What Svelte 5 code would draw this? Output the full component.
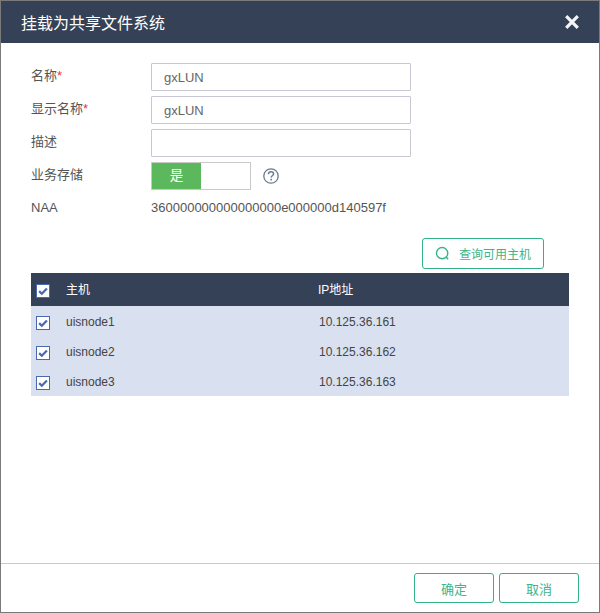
<script>
  const hosts = [
    { name: 'uisnode1', ip: '10.125.36.161' },
    { name: 'uisnode2', ip: '10.125.36.162' },
    { name: 'uisnode3', ip: '10.125.36.163' }
  ];
</script>

{#snippet check()}
  <span class="cb">
    <svg viewBox="0 0 14 14" width="12" height="12"><path d="M2.5 7.2 L5.6 10.2 L11.6 4" fill="none" stroke="#4a69b0" stroke-width="2.6"/></svg>
  </span>
{/snippet}

<div class="dialog">
  <header class="head">
    <h1>挂载为共享文件系统</h1>
    <svg class="close" viewBox="0 0 16 16" width="16" height="16"><path d="M2.2 2.2 L13.8 13.8 M13.8 2.2 L2.2 13.8" stroke="#f4f5f6" stroke-width="3.2" fill="none"/></svg>
  </header>

  <main class="body">
    <div class="form">
      <div class="row"><span class="label">名称<i>*</i></span><div class="input">gxLUN</div></div>
      <div class="row"><span class="label">显示名称<i>*</i></span><div class="input">gxLUN</div></div>
      <div class="row"><span class="label">描述</span><div class="input"></div></div>
      <div class="row">
        <span class="label">业务存储</span>
        <div class="switch"><span class="on">是</span><span class="off"></span></div>
        <svg class="help" viewBox="0 0 16 16" width="16" height="16">
          <circle cx="8" cy="8" r="7.2" fill="none" stroke="#6b7a90" stroke-width="1.3"/>
          <path d="M5.4 6.2 C5.5 4.6 6.7 3.8 8 3.8 C9.5 3.8 10.6 4.7 10.6 6 C10.6 7.5 8.2 7.6 8.2 9.6" fill="none" stroke="#6b7a90" stroke-width="1.5"/>
          <rect x="7.4" y="10.8" width="1.6" height="1.6" fill="#6b7a90"/>
        </svg>
      </div>
      <div class="row naa"><span class="label">NAA</span><span class="value">360000000000000000e000000d140597f</span></div>
    </div>

    <div class="tools">
      <button class="btn query">
        <svg viewBox="0 0 16 16" width="15" height="15"><circle cx="7.6" cy="7.6" r="6" fill="none" stroke="#35b58a" stroke-width="1.5"/><path d="M12 12 L14 14" stroke="#35b58a" stroke-width="1.6"/></svg>
        查询可用主机
      </button>
    </div>

    <table>
      <thead>
        <tr><th class="c">{@render check()}</th><th class="n"><span>主机</span></th><th><span>IP地址</span></th></tr>
      </thead>
      <tbody>
        {#each hosts as h}
          <tr><td class="c">{@render check()}</td><td class="n"><span>{h.name}</span></td><td><span class="ip">{h.ip}</span></td></tr>
        {/each}
      </tbody>
    </table>
  </main>

  <footer class="foot">
    <button class="btn">确定</button>
    <button class="btn">取消</button>
  </footer>
</div>

<style>
  :global(body) { margin: 0; background: #fff; }
  .dialog {
    box-sizing: border-box;
    width: 600px;
    height: 613px;
    border: 1px solid #7a7a7a;
    display: flex;
    flex-direction: column;
    font-family: "Liberation Sans", "Noto Sans CJK SC", sans-serif;
    font-size: 13px;
    color: #555;
    background: #fff;
  }
  .head {
    flex: none;
    height: 42px;
    background: #354157;
    display: flex;
    align-items: center;
    justify-content: space-between;
    padding: 0 19px 0 20px;
  }
  h1 { margin: 0; font-size: 16px; font-weight: 400; color: #fff; }
  .body { flex: 1; padding: 20px 30px 0; }
  .form { display: flex; flex-direction: column; gap: 5px; }
  .row { display: flex; align-items: center; height: 28px; }
  .label { width: 120px; flex: none; padding-bottom: 5px; }
  .label i { color: #f03030; font-style: normal; }
  .input {
    box-sizing: border-box;
    width: 260px;
    height: 28px;
    line-height: 27px;
    border: 1px solid #c9c7d3;
    border-radius: 1px;
    padding: 0 12px;
    font-size: 13px;
    color: #666;
  }
  .switch {
    box-sizing: border-box;
    display: flex;
    width: 100px;
    height: 28px;
    border: 1px solid #c9c9c9;
  }
  .on { width: 49px; background: #5cb85c; color: #fff; text-align: center; line-height: 26px; font-size: 13.5px; }
  .help { margin-left: 12px; }
  .naa { margin-top: 3px; height: 25px; }
  .naa .label { padding-bottom: 7px; }
  .naa .value { padding-bottom: 7px; }
  .tools { display: flex; justify-content: flex-end; padding: 15px 25px 4px 0; }
  .btn {
    box-sizing: border-box;
    width: 80px;
    height: 30px;
    border: 1px solid #2fb387;
    border-radius: 3px;
    background: #fff;
    color: #3cb48c;
    font: inherit;
    padding: 0;
  }
  .query {
    width: 122px;
    height: 31px;
    font-size: 12px;
    display: flex;
    align-items: center;
    gap: 9px;
    padding-left: 12px;
  }
  table { width: 538px; border-collapse: collapse; table-layout: fixed; font-size: 12px; margin-top: 0; }
  th { height: 33px; padding: 0; background: #354157; color: #fff; font-weight: 400; text-align: left; }
  td { height: 30px; padding: 0; background: #d9e0ef; color: #444; }
  th span { position: relative; top: -1px; }
  td span { position: relative; top: 1px; }
  td .ip { left: 1px; }
  th.c, td.c { width: 35px; padding-left: 5px; box-sizing: border-box; }
  td .cb { top: 2px; }
  th .cb { top: 1px; }
  .n { width: 252px; }
  .cb {
    box-sizing: border-box;
    display: flex;
    align-items: center;
    justify-content: center;
    width: 14px;
    height: 14px;
    border: 1px solid #4a69b0;
    background: #fff;
  }
  .foot {
    flex: none;
    box-sizing: border-box;
    height: 49px;
    border-top: 1px solid #c9c7d3;
    display: flex;
    justify-content: flex-end;
    align-items: flex-start;
    gap: 5px;
    padding: 9px 20px 0 0;
  }
</style>
